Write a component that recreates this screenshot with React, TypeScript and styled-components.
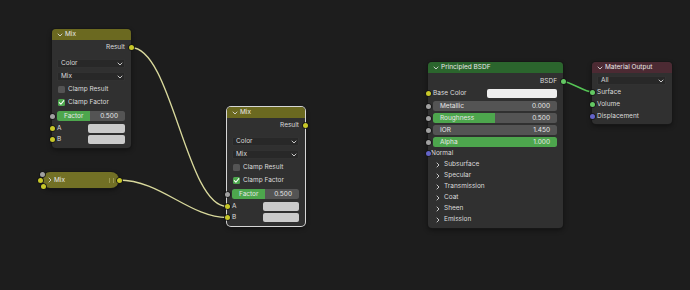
import React from 'react';
import styled, {createGlobalStyle} from 'styled-components';

const colors = {
    canvas: '#1d1d1d',
    node: '#303030',
    field: '#282828',
    text: '#dcdcdc',
    mix: '#6b6920',
    mixCollapsed: '#727025',
    shader: '#2b652d',
    output: '#4c2a33',
    slider: '#4da64d',
    sliderBg: '#545454',
    yellow: '#c7c729',
    grey: '#a1a1a1',
    purple: '#6363c7',
    green: '#63c763',
};

const GlobalStyle = createGlobalStyle`
    html, body {
        margin: 0;
        padding: 0;
        background: ${colors.canvas};
    }
    body {
        font-family: Inter, "Noto Sans", "DejaVu Sans", sans-serif;
    }
`;

const Chevron = ({dir = 'down'}: {dir?: 'down' | 'right'}) => (
    <ChevronSvg viewBox='0 0 6 6'>
        {dir === 'down' ? (
            <polyline points='1,2 3,4 5,2' />
        ) : (
            <polyline points='2,1 4,3 2,5' />
        )}
    </ChevronSvg>
);

const Tick = () => (
    <TickSvg viewBox='0 0 8 8'>
        <polyline points='1.5,4.2 3.3,6 6.6,1.8' />
    </TickSvg>
);

type MixProps = {x: number; y: number; w: number; selected?: boolean};

const MixNode = ({x, y, w, selected}: MixProps) => (
    <Node $x={x} $y={y} $w={w} $selected={selected}>
        <Header $bg={colors.mix}>
            <Chevron />
            Mix
        </Header>
        <Body $pt={2} $pb={3}>
            <Row $right>
                Result
                <Socket $color={colors.yellow} $side='right' />
            </Row>
            <Row $h={9} $mt={6}>
                <Select>
                    Color
                    <Chevron />
                </Select>
            </Row>
            <Row $h={9} $mt={4}>
                <Select>
                    Mix
                    <Chevron />
                </Select>
            </Row>
            <Row $mt={3}>
                <Check />
                Clamp Result
            </Row>
            <Row $mt={2}>
                <Check $on>
                    <Tick />
                </Check>
                Clamp Factor
            </Row>
            <Row $h={10} $mt={3}>
                <Socket $color={colors.grey} />
                <Slider $fill={49}>
                    <span>Factor</span>
                    <span>0.500</span>
                </Slider>
            </Row>
            <Row $mt={2}>
                <Socket $color={colors.yellow} />
                <Label $w={29}>A</Label>
                <ColorField $bg='#cbcbcb' />
            </Row>
            <Row>
                <Socket $color={colors.yellow} />
                <Label $w={29}>B</Label>
                <ColorField $bg='#cbcbcb' />
            </Row>
        </Body>
    </Node>
);

const bsdfSliders = [
    {label: 'Metallic', value: '0.000', fill: 0},
    {label: 'Roughness', value: '0.500', fill: 50},
    {label: 'IOR', value: '1.450', fill: 0},
    {label: 'Alpha', value: '1.000', fill: 100},
];

const bsdfPanels = ['Subsurface', 'Specular', 'Transmission', 'Coat', 'Sheen', 'Emission'];

const outputs = [
    {label: 'Surface', color: colors.green},
    {label: 'Volume', color: colors.green},
    {label: 'Displacement', color: colors.purple},
];

const App = () => {
    return (
        <Canvas>
            <GlobalStyle />
            <Links viewBox='0 0 690 290'>
                <path d='M131 47.5 C 172 47.5, 186 206.5, 227 206.5' stroke='#d9d99c' />
                <path d='M119 180 C 160 180, 190 217.5, 227 217.5' stroke='#d9d99c' />
                <path d='M563 81.5 C 570 81.5, 585 92, 592 92' stroke='#55c455' strokeWidth={1.5} />
            </Links>

            <MixNode x={52} y={29} w={79} />

            <Collapsed>
                <Socket $color={colors.grey} $at={[-0.3, 2]} />
                <Socket $color={colors.yellow} $at={[-2.3, 8]} />
                <Socket $color={colors.yellow} $at={[0.3, 14]} />
                <Chevron dir='right' />
                <CollapsedTitle>Mix</CollapsedTitle>
                <Grip />
                <Socket $color={colors.yellow} $side='right' />
            </Collapsed>

            <MixNode x={227} y={107} w={78} selected />

            <Node $x={428} $y={62} $w={135}>
                <Header $bg={colors.shader}>
                    <Chevron />
                    Principled BSDF
                </Header>
                <Body $pt={3} $pb={3}>
                    <Row $right>
                        BSDF
                        <Socket $color={colors.green} $side='right' />
                    </Row>
                    <Row $mt={1}>
                        <Socket $color={colors.yellow} />
                        <Label $w={52}>Base Color</Label>
                        <ColorField $bg='#eeeeee' />
                    </Row>
                    {bsdfSliders.map((s, i) => (
                        <Row key={s.label} $h={10} $mt={i === 0 ? 2 : 2}>
                            <Socket $color={colors.grey} />
                            <Slider $fill={s.fill}>
                                <span>{s.label}</span>
                                <span>{s.value}</span>
                            </Slider>
                        </Row>
                    ))}
                    <Row $mt={1} $pl={3}>
                        <Socket $color={colors.purple} />
                        Normal
                    </Row>
                    {bsdfPanels.map(p => (
                        <Row key={p} $pl={7}>
                            <Chevron dir='right' />
                            <PanelName>{p}</PanelName>
                        </Row>
                    ))}
                </Body>
            </Node>

            <Node $x={592} $y={62} $w={80}>
                <Header $bg={colors.output}>
                    <Chevron />
                    Material Output
                </Header>
                <Body $pt={3} $pb={2}>
                    <Row $h={9}>
                        <Select>
                            All
                            <Chevron />
                        </Select>
                    </Row>
                    {outputs.map((o, i) => (
                        <Row key={o.label} $h={12} $mt={i === 0 ? 1 : 0}>
                            <Socket $color={o.color} />
                            {o.label}
                        </Row>
                    ))}
                </Body>
            </Node>
        </Canvas>
    );
};

export default App;

const Canvas = styled.div`
    position: relative;
    width: 690px;
    height: 290px;
    overflow: hidden;
    background-color: ${colors.canvas};
    color: ${colors.text};
    font-size: 6.5px;
    line-height: 1;
`;

const Links = styled.svg`
    position: absolute;
    left: 0;
    top: 0;
    width: 690px;
    height: 290px;
    fill: none;
    stroke-width: 1.3;
`;

interface INode {
    $x: number;
    $y: number;
    $w: number;
    $selected?: boolean;
}

const Node = styled.div<INode>`
    position: absolute;
    left: ${p => p.$x}px;
    top: ${p => p.$y}px;
    width: ${p => p.$w}px;
    background-color: ${colors.node};
    border-radius: 4px;
    box-shadow: ${p => (p.$selected ? '0 0 0 1px #d6d6d6' : '0 0 0 1px #171717')},
        0 2px 5px rgba(0, 0, 0, 0.45);
`;

const Header = styled.div<{$bg: string}>`
    height: 11px;
    display: flex;
    align-items: center;
    gap: 2px;
    padding-left: 5px;
    background-color: ${p => p.$bg};
    border-radius: 4px 4px 0 0;
    color: #e8e8e8;
`;

const Body = styled.div<{$pt: number; $pb: number}>`
    display: flex;
    flex-direction: column;
    padding-top: ${p => p.$pt}px;
    padding-bottom: ${p => p.$pb}px;
`;

interface IRow {
    $h?: number;
    $mt?: number;
    $right?: boolean;
    $pl?: number;
}

const Row = styled.div<IRow>`
    position: relative;
    height: ${p => p.$h ?? 11}px;
    margin-top: ${p => p.$mt ?? 0}px;
    display: flex;
    align-items: center;
    justify-content: ${p => (p.$right ? 'flex-end' : 'flex-start')};
    gap: 2px;
    padding: 0 6px 0 ${p => p.$pl ?? 5}px;
`;

const Socket = styled.span<{$color: string; $side?: 'left' | 'right'; $at?: [number, number]}>`
    position: absolute;
    width: 5px;
    height: 5px;
    border-radius: 50%;
    background-color: ${p => p.$color};
    box-shadow: 0 0 0 0.8px #141414;
    ${p =>
        p.$at
            ? `left: ${p.$at[0] - 2.5}px; top: ${p.$at[1] - 2.5}px;`
            : p.$side === 'right'
            ? 'right: -2.5px; top: 50%; margin-top: -2.5px;'
            : 'left: -2.5px; top: 50%; margin-top: -2.5px;'}
`;

const Select = styled.div`
    flex: 1;
    height: 9px;
    display: flex;
    align-items: center;
    justify-content: space-between;
    padding: 0 2px 0 4px;
    background-color: ${colors.field};
    border-radius: 2px;
    box-shadow: inset 0 0 0 0.6px #3b3b3b;
`;

const ChevronSvg = styled.svg`
    width: 6px;
    height: 6px;
    flex-shrink: 0;
    fill: none;
    stroke: #d8d8d8;
    stroke-width: 0.9;
    stroke-linecap: round;
    stroke-linejoin: round;
`;

const Check = styled.span<{$on?: boolean}>`
    width: 7px;
    height: 7px;
    margin: 0 1px 0 1px;
    border-radius: 1.5px;
    background-color: ${p => (p.$on ? colors.slider : colors.sliderBg)};
    display: flex;
`;

const TickSvg = styled.svg`
    width: 7px;
    height: 7px;
    fill: none;
    stroke: white;
    stroke-width: 1.2;
    stroke-linecap: round;
    stroke-linejoin: round;
`;

const Slider = styled.div<{$fill: number}>`
    flex: 1;
    height: 10px;
    display: flex;
    align-items: center;
    justify-content: space-between;
    padding: 0 7px 0 7px;
    border-radius: 2.5px;
    background: linear-gradient(
        to right,
        ${colors.slider} 0 ${p => p.$fill}%,
        ${colors.sliderBg} ${p => p.$fill}% 100%
    );
    color: #e6e6e6;
`;

const Label = styled.span<{$w: number}>`
    width: ${p => p.$w}px;
    flex-shrink: 0;
`;

const ColorField = styled.span<{$bg: string}>`
    flex: 1;
    height: 9px;
    border-radius: 2px;
    background-color: ${p => p.$bg};
`;

const PanelName = styled.span`
    margin-left: 1px;
`;

const Collapsed = styled.div`
    position: absolute;
    left: 43px;
    top: 172px;
    width: 76px;
    height: 16px;
    box-sizing: border-box;
    display: flex;
    align-items: center;
    gap: 1px;
    padding-left: 4px;
    background-color: ${colors.mixCollapsed};
    border-radius: 7px 8px 8px 7px;
    box-shadow: 0 0 0 1px #171717, 0 2px 5px rgba(0, 0, 0, 0.45);
    color: #e8e8e8;
`;

const CollapsedTitle = styled.span`
    flex: 1;
`;

const Grip = styled.span`
    width: 3px;
    height: 5px;
    margin-right: 5px;
    border-left: 1px solid #9a9850;
    border-right: 1px solid #9a9850;
`;
